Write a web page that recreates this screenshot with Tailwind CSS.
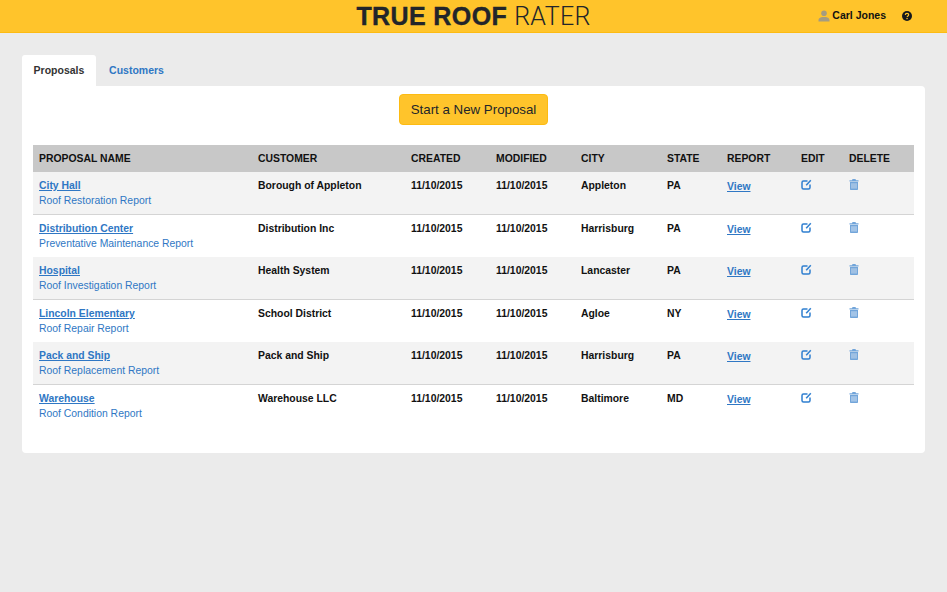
<!DOCTYPE html>
<html lang="en">
<head>
<meta charset="UTF-8">
<title>True Roof Rater</title>
<script src="https://cdn.jsdelivr.net/npm/@tailwindcss/browser@4"></script>
</head>
<body class="bg-[#ebebeb] font-['Liberation_Sans',Arial,sans-serif] text-[#111] h-[592px] overflow-hidden">

<header class="relative flex items-center justify-center h-[33px] bg-[#ffc42b] border-b border-[#fdbb12]">
  <div class="pt-[1px] text-[25px] leading-[32px] text-[#22252a] whitespace-nowrap"><span class="font-bold tracking-[0.4px] [-webkit-text-stroke:0.4px_#22252a]">TRUE ROOF</span> <span class="font-['Roboto',sans-serif] font-light tracking-[0.3px]">RATER</span></div>
  <div class="absolute right-[35px] top-0 flex items-center h-[32px] text-[10.5px] font-bold">
    <svg class="w-[12px] h-[12px] mr-[2px] text-[#a59c80]" viewBox="0 0 12 12" fill="currentColor"><circle cx="6" cy="3.200" r="2.800"/><path d="M0.500 11.500V10c0-1.600 1.600-2.400 3.600-3h3.800c2 .6 3.600 1.400 3.600 3v1.500z"/></svg>
    <span>Carl Jones</span>
    <svg class="w-[10px] h-[10px] ml-[16px]" viewBox="0 0 10 10"><circle cx="5" cy="5" r="5" fill="#15181c"/><path d="M3.300 3.900c0-1 .8-1.500 1.700-1.500s1.700.5 1.700 1.400c0 1.100-1.500 1.100-1.500 2.200" fill="none" stroke="#ffc42b" stroke-width="1.200"/><rect x="4.400" y="6.900" width="1.300" height="1.300" fill="#ffc42b"/></svg>
  </div>
</header>

<main class="px-[22px] pt-[22px]">
  <nav class="flex h-[31px] text-[10.5px] font-bold">
    <a class="flex items-center justify-center w-[74px] bg-white rounded-t-[3px] text-[#333]">Proposals</a>
    <a class="flex items-center justify-center w-[81px] text-[#2f77c4]">Customers</a>
  </nav>

  <section class="h-[367px] w-[903px] bg-white rounded-b-[4px] rounded-tr-[4px] px-[11px] pt-[8px]">
    <div class="flex justify-center">
      <button class="w-[149px] h-[31px] bg-[#ffc42b] border border-[#fdbb12] rounded-[4px] text-[13.3px] text-[#22252a]">Start a New Proposal</button>
    </div>

    <table class="mt-[20px] w-[881px] table-fixed border-separate border-spacing-0 text-[10.4px] font-bold text-left">
      <thead>
        <tr class="h-[27px] bg-[#c8c8c8]">
          <th class="w-[219px] pl-[6px]">PROPOSAL NAME</th>
          <th class="w-[153px] pl-[6px]">CUSTOMER</th>
          <th class="w-[85px] pl-[6px]">CREATED</th>
          <th class="w-[85px] pl-[6px]">MODIFIED</th>
          <th class="w-[86px] pl-[6px]">CITY</th>
          <th class="w-[60px] pl-[6px]">STATE</th>
          <th class="w-[74px] pl-[6px]">REPORT</th>
          <th class="w-[48px] pl-[6px]">EDIT</th>
          <th class="w-[71px] pl-[6px]">DELETE</th>
        </tr>
      </thead>
      <tbody>
        <tr class="h-[43px] bg-[#f3f3f3] align-top leading-[13px] [&>td]:border-b [&>td]:border-[#d4d4d4]">
          <td class="pl-[6px] pt-[7px]"><a class="block underline text-[#2f77c4]">City Hall</a><a class="block mt-[2px] font-normal text-[#2f77c4]">Roof Restoration Report</a></td>
          <td class="pl-[6px] pt-[7px]">Borough of Appleton</td>
          <td class="pl-[6px] pt-[7px]">11/10/2015</td>
          <td class="pl-[6px] pt-[7px]">11/10/2015</td>
          <td class="pl-[6px] pt-[7px]">Appleton</td>
          <td class="pl-[6px] pt-[7px]">PA</td>
          <td class="pl-[6px] pt-[8px]"><a class="underline text-[#2f77c4]">View</a></td>
          <td class="pl-[6px] pt-[7px]"><svg class="w-[11px] h-[11px] text-[#2f7fd0]" viewBox="0 0 11 11" fill="none" stroke="currentColor" stroke-width="1.500"><path d="M6.500 2H2.500C1.500 2 1 2.500 1 3.500v5C1 9.500 1.500 10 2.500 10h5C8.500 10 9 9.500 9 8.500V5.500"/><path d="M5.200 6.200 9.800 1.200" stroke-width="1.500"/></svg></td>
          <td class="pl-[6px] pt-[7px]"><svg class="w-[10px] h-[11px] text-[#72a5da]" viewBox="0 0 10 11" fill="currentColor"><path d="M3.500 0h3l.5 1.200h2.500V2.400H.5V1.200H3zM1 3h8v7c0 .6-.4 1-1 1H2c-.6 0-1-.4-1-1z"/><path d="M3 4.200v5.400M5 4.200v5.400M7 4.200v5.400" stroke="#f3f3f3" stroke-width=".7"/></svg></td>
        </tr>
        <tr class="h-[42px] align-top leading-[13px]">
          <td class="pl-[6px] pt-[7px]"><a class="block underline text-[#2f77c4]">Distribution Center</a><a class="block mt-[2px] font-normal text-[#2f77c4]">Preventative Maintenance Report</a></td>
          <td class="pl-[6px] pt-[7px]">Distribution Inc</td>
          <td class="pl-[6px] pt-[7px]">11/10/2015</td>
          <td class="pl-[6px] pt-[7px]">11/10/2015</td>
          <td class="pl-[6px] pt-[7px]">Harrisburg</td>
          <td class="pl-[6px] pt-[7px]">PA</td>
          <td class="pl-[6px] pt-[8px]"><a class="underline text-[#2f77c4]">View</a></td>
          <td class="pl-[6px] pt-[7px]"><svg class="w-[11px] h-[11px] text-[#2f7fd0]" viewBox="0 0 11 11" fill="none" stroke="currentColor" stroke-width="1.500"><path d="M6.500 2H2.500C1.500 2 1 2.500 1 3.500v5C1 9.500 1.500 10 2.500 10h5C8.500 10 9 9.500 9 8.500V5.500"/><path d="M5.200 6.200 9.800 1.200" stroke-width="1.500"/></svg></td>
          <td class="pl-[6px] pt-[7px]"><svg class="w-[10px] h-[11px] text-[#72a5da]" viewBox="0 0 10 11" fill="currentColor"><path d="M3.500 0h3l.5 1.200h2.500V2.400H.5V1.200H3zM1 3h8v7c0 .6-.4 1-1 1H2c-.6 0-1-.4-1-1z"/><path d="M3 4.200v5.400M5 4.200v5.400M7 4.200v5.400" stroke="#fff" stroke-width=".7"/></svg></td>
        </tr>
        <tr class="h-[43px] bg-[#f3f3f3] align-top leading-[13px] [&>td]:border-b [&>td]:border-[#d4d4d4]">
          <td class="pl-[6px] pt-[7px]"><a class="block underline text-[#2f77c4]">Hospital</a><a class="block mt-[2px] font-normal text-[#2f77c4]">Roof Investigation Report</a></td>
          <td class="pl-[6px] pt-[7px]">Health System</td>
          <td class="pl-[6px] pt-[7px]">11/10/2015</td>
          <td class="pl-[6px] pt-[7px]">11/10/2015</td>
          <td class="pl-[6px] pt-[7px]">Lancaster</td>
          <td class="pl-[6px] pt-[7px]">PA</td>
          <td class="pl-[6px] pt-[8px]"><a class="underline text-[#2f77c4]">View</a></td>
          <td class="pl-[6px] pt-[7px]"><svg class="w-[11px] h-[11px] text-[#2f7fd0]" viewBox="0 0 11 11" fill="none" stroke="currentColor" stroke-width="1.500"><path d="M6.500 2H2.500C1.500 2 1 2.500 1 3.500v5C1 9.500 1.500 10 2.500 10h5C8.500 10 9 9.500 9 8.500V5.500"/><path d="M5.200 6.200 9.800 1.200" stroke-width="1.500"/></svg></td>
          <td class="pl-[6px] pt-[7px]"><svg class="w-[10px] h-[11px] text-[#72a5da]" viewBox="0 0 10 11" fill="currentColor"><path d="M3.500 0h3l.5 1.200h2.500V2.400H.5V1.200H3zM1 3h8v7c0 .6-.4 1-1 1H2c-.6 0-1-.4-1-1z"/><path d="M3 4.200v5.400M5 4.200v5.400M7 4.200v5.400" stroke="#f3f3f3" stroke-width=".7"/></svg></td>
        </tr>
        <tr class="h-[42px] align-top leading-[13px]">
          <td class="pl-[6px] pt-[7px]"><a class="block underline text-[#2f77c4]">Lincoln Elementary</a><a class="block mt-[2px] font-normal text-[#2f77c4]">Roof Repair Report</a></td>
          <td class="pl-[6px] pt-[7px]">School District</td>
          <td class="pl-[6px] pt-[7px]">11/10/2015</td>
          <td class="pl-[6px] pt-[7px]">11/10/2015</td>
          <td class="pl-[6px] pt-[7px]">Agloe</td>
          <td class="pl-[6px] pt-[7px]">NY</td>
          <td class="pl-[6px] pt-[8px]"><a class="underline text-[#2f77c4]">View</a></td>
          <td class="pl-[6px] pt-[7px]"><svg class="w-[11px] h-[11px] text-[#2f7fd0]" viewBox="0 0 11 11" fill="none" stroke="currentColor" stroke-width="1.500"><path d="M6.500 2H2.500C1.500 2 1 2.500 1 3.500v5C1 9.500 1.500 10 2.500 10h5C8.500 10 9 9.500 9 8.500V5.500"/><path d="M5.200 6.200 9.800 1.200" stroke-width="1.500"/></svg></td>
          <td class="pl-[6px] pt-[7px]"><svg class="w-[10px] h-[11px] text-[#72a5da]" viewBox="0 0 10 11" fill="currentColor"><path d="M3.500 0h3l.5 1.200h2.500V2.400H.5V1.200H3zM1 3h8v7c0 .6-.4 1-1 1H2c-.6 0-1-.4-1-1z"/><path d="M3 4.200v5.400M5 4.200v5.400M7 4.200v5.400" stroke="#fff" stroke-width=".7"/></svg></td>
        </tr>
        <tr class="h-[43px] bg-[#f3f3f3] align-top leading-[13px] [&>td]:border-b [&>td]:border-[#d4d4d4]">
          <td class="pl-[6px] pt-[7px]"><a class="block underline text-[#2f77c4]">Pack and Ship</a><a class="block mt-[2px] font-normal text-[#2f77c4]">Roof Replacement Report</a></td>
          <td class="pl-[6px] pt-[7px]">Pack and Ship</td>
          <td class="pl-[6px] pt-[7px]">11/10/2015</td>
          <td class="pl-[6px] pt-[7px]">11/10/2015</td>
          <td class="pl-[6px] pt-[7px]">Harrisburg</td>
          <td class="pl-[6px] pt-[7px]">PA</td>
          <td class="pl-[6px] pt-[8px]"><a class="underline text-[#2f77c4]">View</a></td>
          <td class="pl-[6px] pt-[7px]"><svg class="w-[11px] h-[11px] text-[#2f7fd0]" viewBox="0 0 11 11" fill="none" stroke="currentColor" stroke-width="1.500"><path d="M6.500 2H2.500C1.500 2 1 2.500 1 3.500v5C1 9.500 1.500 10 2.500 10h5C8.500 10 9 9.500 9 8.500V5.500"/><path d="M5.200 6.200 9.800 1.200" stroke-width="1.500"/></svg></td>
          <td class="pl-[6px] pt-[7px]"><svg class="w-[10px] h-[11px] text-[#72a5da]" viewBox="0 0 10 11" fill="currentColor"><path d="M3.500 0h3l.5 1.200h2.500V2.400H.5V1.200H3zM1 3h8v7c0 .6-.4 1-1 1H2c-.6 0-1-.4-1-1z"/><path d="M3 4.200v5.400M5 4.200v5.400M7 4.200v5.400" stroke="#f3f3f3" stroke-width=".7"/></svg></td>
        </tr>
        <tr class="h-[42px] align-top leading-[13px]">
          <td class="pl-[6px] pt-[7px]"><a class="block underline text-[#2f77c4]">Warehouse</a><a class="block mt-[2px] font-normal text-[#2f77c4]">Roof Condition Report</a></td>
          <td class="pl-[6px] pt-[7px]">Warehouse LLC</td>
          <td class="pl-[6px] pt-[7px]">11/10/2015</td>
          <td class="pl-[6px] pt-[7px]">11/10/2015</td>
          <td class="pl-[6px] pt-[7px]">Baltimore</td>
          <td class="pl-[6px] pt-[7px]">MD</td>
          <td class="pl-[6px] pt-[8px]"><a class="underline text-[#2f77c4]">View</a></td>
          <td class="pl-[6px] pt-[7px]"><svg class="w-[11px] h-[11px] text-[#2f7fd0]" viewBox="0 0 11 11" fill="none" stroke="currentColor" stroke-width="1.500"><path d="M6.500 2H2.500C1.500 2 1 2.500 1 3.500v5C1 9.500 1.500 10 2.500 10h5C8.500 10 9 9.500 9 8.500V5.500"/><path d="M5.200 6.200 9.800 1.200" stroke-width="1.500"/></svg></td>
          <td class="pl-[6px] pt-[7px]"><svg class="w-[10px] h-[11px] text-[#72a5da]" viewBox="0 0 10 11" fill="currentColor"><path d="M3.500 0h3l.5 1.200h2.500V2.400H.5V1.200H3zM1 3h8v7c0 .6-.4 1-1 1H2c-.6 0-1-.4-1-1z"/><path d="M3 4.200v5.400M5 4.200v5.400M7 4.200v5.400" stroke="#fff" stroke-width=".7"/></svg></td>
        </tr>
      </tbody>
    </table>
  </section>
</main>
</body>
</html>
